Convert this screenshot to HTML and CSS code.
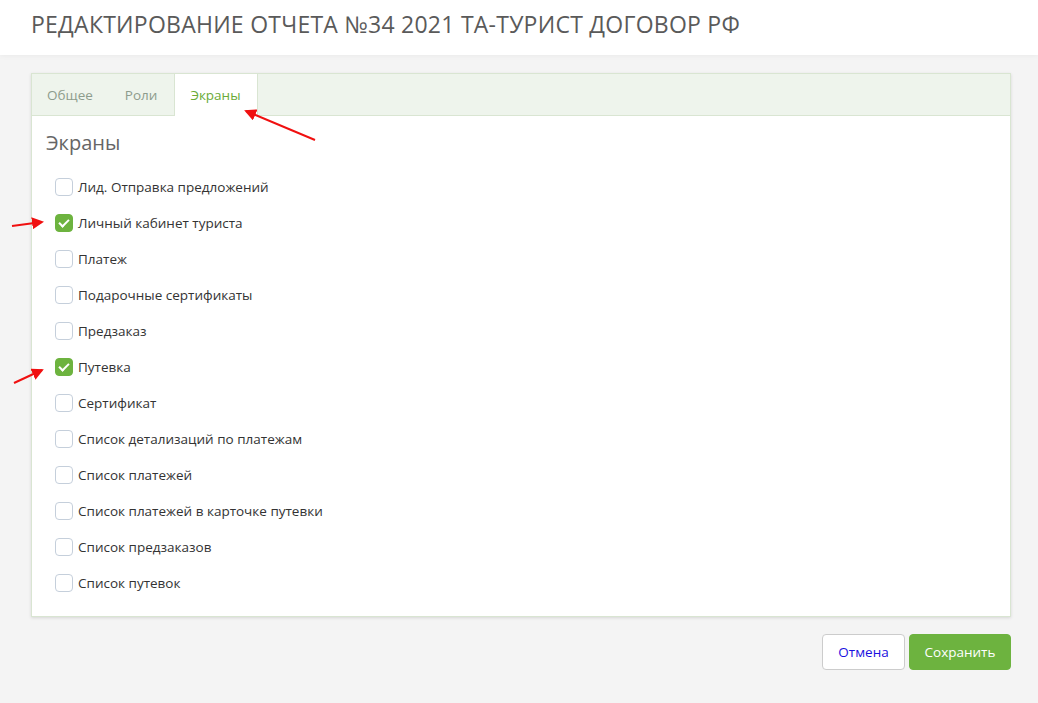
FILE: index.html
```html
<!DOCTYPE html>
<html lang="ru">
  <head>
    <meta charset="UTF-8" />
    <title>Редактирование отчета</title>
    <link rel="stylesheet" href="styles.css">
  </head>
  <body>
    <header class="page-header">
      <h1>Редактирование отчета №34 2021 ТА-Турист договор РФ</h1>
    </header>

    <main class="page-body">
      <div class="panel">
        <ul class="tabs">
          <li class="tab">Общее</li>
          <li class="tab">Роли</li>
          <li class="tab active">Экраны</li>
        </ul>
        <div class="panel-content">
          <h2 class="section-title">Экраны</h2>
          <ul class="screen-list">
            <li><span class="check"></span>Лид. Отправка предложений</li>
            <li><span class="check checked"></span>Личный кабинет туриста</li>
            <li><span class="check"></span>Платеж</li>
            <li><span class="check"></span>Подарочные сертификаты</li>
            <li><span class="check"></span>Предзаказ</li>
            <li><span class="check checked"></span>Путевка</li>
            <li><span class="check"></span>Сертификат</li>
            <li><span class="check"></span>Список детализаций по платежам</li>
            <li><span class="check"></span>Список платежей</li>
            <li><span class="check"></span>Список платежей в карточке путевки</li>
            <li><span class="check"></span>Список предзаказов</li>
            <li><span class="check"></span>Список путевок</li>
          </ul>
        </div>
      </div>

      <div class="actions">
        <button class="btn btn-cancel">Отмена</button>
        <button class="btn btn-save">Сохранить</button>
      </div>
    </main>

    <!-- красные стрелки-пометки поверх скриншота -->
    <svg class="marks" width="1038" height="703" viewBox="0 0 1038 703">
      <defs>
        <marker id="head" markerWidth="6" markerHeight="6" refX="5" refY="3" orient="auto" markerUnits="strokeWidth">
          <path d="M0,0 L6,3 L0,6 z" fill="#f01010" />
        </marker>
      </defs>
      <line x1="315" y1="140" x2="246" y2="111" stroke="#f01010" stroke-width="2" marker-end="url(#head)" />
      <line x1="12" y1="226" x2="42" y2="222" stroke="#f01010" stroke-width="2" marker-end="url(#head)" />
      <line x1="14" y1="383" x2="42" y2="370" stroke="#f01010" stroke-width="2" marker-end="url(#head)" />
    </svg>
  </body>
</html>
```

FILE: styles.css
```css
* {
  margin: 0;
  padding: 0;
  box-sizing: border-box;
}

body {
  background-color: #f4f4f4;
  font-family: "Open Sans", "Liberation Sans", sans-serif;
  color: #333;
  min-height: 703px;
}

.page-header {
  background-color: #fff;
  height: 55px;
  padding: 8px 31px 0;
  box-shadow: 0 0 6px rgba(0, 0, 0, 0.06);
}

.page-header h1 {
  font-size: 23px;
  font-weight: 400;
  color: #5a5a5a;
  text-transform: uppercase;
  line-height: 32px;
  letter-spacing: 0.25px;
}

.page-body {
  padding: 18px 27px 0 31px;
}

/* панель с вкладками */
.panel {
  background-color: #fff;
  border: 1px solid #d9e5d2;
  box-shadow: 0 1px 3px rgba(0, 0, 0, 0.12);
}

.tabs {
  list-style: none;
  display: flex;
  height: 42px;
  background-color: #eef4ec;
  border-bottom: 1px solid #d9e5d2;
}

.tab {
  padding: 0 17px 0 15px;
  line-height: 42px;
  font-size: 13.5px;
  color: #8d9c8d;
}

.tab.active {
  background-color: #fff;
  color: #6aab37;
  border-left: 1px solid #d9e5d2;
  border-right: 1px solid #d9e5d2;
  height: 42px;
  padding: 0 16px 0 15px;
}

.panel-content {
  padding: 13px 14px 15px 14px;
}

.section-title {
  font-size: 20px;
  font-weight: 400;
  color: #666;
  line-height: 28px;
  margin-bottom: 12px;
}

.screen-list {
  list-style: none;
  padding-left: 9px;
}

.screen-list li {
  display: flex;
  align-items: center;
  gap: 5px;
  height: 36px;
  font-size: 13.5px;
  color: #333;
}

.check {
  width: 18px;
  height: 18px;
  border: 1px solid #c5cfdb;
  border-radius: 4px;
  background-color: #fff;
  display: inline-flex;
  align-items: center;
  justify-content: center;
}

.check.checked {
  background-color: #6db33f;
  border-color: #6db33f;
}

.check.checked::after {
  content: "";
  width: 8px;
  height: 4px;
  border-left: 2px solid #fff;
  border-bottom: 2px solid #fff;
  transform: translateY(-1px) rotate(-45deg);
}

/* кнопки */
.actions {
  display: flex;
  justify-content: flex-end;
  gap: 4px;
  margin-top: 17px;
}

.btn {
  height: 36px;
  border-radius: 4px;
  font-family: "Open Sans", "Liberation Sans", sans-serif;
  font-size: 13.5px;
  cursor: pointer;
}

.btn-cancel {
  width: 83px;
  background-color: #fff;
  border: 1px solid #ccc;
  color: #1a10e0;
}

.btn-save {
  width: 102px;
  background-color: #6db33f;
  border: 1px solid #6db33f;
  color: #fff;
}

.marks {
  position: absolute;
  left: 0;
  top: 0;
  pointer-events: none;
}
```
